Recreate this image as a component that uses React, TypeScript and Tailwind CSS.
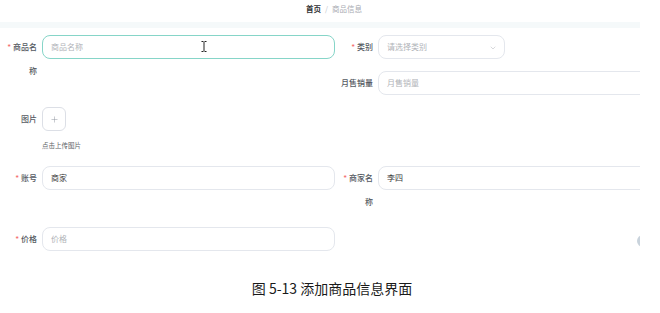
import { ChevronDown, Plus } from 'lucide-react';

const font = { fontFamily: '"Noto Sans CJK SC", "Noto Sans", sans-serif' };

function Label({ lines, required }: { lines: string[]; required?: boolean }) {
  return (
    <div className="w-[32px] shrink-0 text-right text-[8px] leading-[24px] text-[#555a62] font-medium">
      {lines.map((line, i) => (
        <div key={i} className="whitespace-nowrap">
          {i === 0 && required && <span className="text-[#f56c6c] mr-[2px]">*</span>}
          {line}
        </div>
      ))}
    </div>
  );
}

function Field({
  text,
  placeholder,
  width = 'w-[293px]',
  focused,
  children,
}: {
  text?: string;
  placeholder?: string;
  width?: string;
  focused?: boolean;
  children?: React.ReactNode;
}) {
  return (
    <div
      className={`relative ${width} h-[24px] shrink-0 rounded-[8px] border flex items-center px-[8px] text-[8px] ${
        focused ? 'border-[#86d5c8]' : 'border-[#e4e7ed]'
      }`}
    >
      {text ? <span className="text-[#3a3a3a]">{text}</span> : <span className="text-[#b0b3b8]">{placeholder}</span>}
      {children}
    </div>
  );
}

export default function App() {
  return (
    <div className="w-[660px] h-[313px] bg-white overflow-hidden" style={font}>
      <div className="relative w-[640px] h-[272px] overflow-hidden">
        {/* Breadcrumb */}
        <div className="h-[22px] pl-[306px] pt-[4px] text-[7.5px] leading-[10px]">
          <span className="font-bold text-[#303133]">首页</span>
          <span className="text-[#c0c4cc] mx-[4px]">/</span>
          <span className="text-[#a8abb2]">商品信息</span>
        </div>
        <div className="h-[6px] bg-[#f5f9fa]" />

        {/* Form */}
        <div className="pt-[7px]">
          <div className="flex">
            <div className="flex gap-[5px] pl-[5px] w-[335px] shrink-0">
              <Label lines={['商品名', '称']} required />
              <Field placeholder="商品名称" focused>
                <svg className="absolute left-[158px] top-[5px]" width="6" height="11" viewBox="0 0 6 11">
                  <path d="M0.5 0.5h2M3.5 0.5h2M3 1v9M0.5 10.5h2M3.5 10.5h2" stroke="#222" strokeWidth="1" fill="none" />
                </svg>
              </Field>
            </div>
            <div className="ml-[6px] flex flex-col gap-[12px]">
              <div className="flex gap-[5px]">
                <Label lines={['类别']} required />
                <Field placeholder="请选择类别" width="w-[127px]">
                  <ChevronDown className="absolute right-[7px] top-[8px] text-[#b0b3b8]" size={8} strokeWidth={1.5} />
                </Field>
              </div>
              <div className="flex gap-[5px]">
                <Label lines={['月售销量']} />
                <Field placeholder="月售销量" />
              </div>
            </div>
          </div>

          {/* Picture */}
          <div className="mt-[12px] flex gap-[5px] pl-[5px]">
            <Label lines={['图片']} />
            <div>
              <div className="w-[24px] h-[24px] rounded-[6px] border border-[#dcdfe6] flex items-center justify-center">
                <Plus size={9} strokeWidth={1.3} className="text-[#8c939d]" />
              </div>
              <div className="mt-[8px] text-[6.5px] leading-[12px] text-[#606266] whitespace-nowrap">点击上传图片</div>
            </div>
          </div>

          <div className="mt-[15px] flex">
            <div className="flex gap-[5px] pl-[5px] w-[335px] shrink-0">
              <Label lines={['账号']} required />
              <Field text="商家" />
            </div>
            <div className="ml-[6px] flex gap-[5px]">
              <Label lines={['商家名', '称']} required />
              <Field text="李四" />
            </div>
          </div>

          <div className="mt-[13px] flex gap-[5px] pl-[5px]">
            <Label lines={['价格']} required />
            <Field placeholder="价格" />
          </div>
        </div>

        <div className="absolute left-[637px] top-[235px] w-[12px] h-[12px] rounded-full bg-[#c9d3dc]" />
      </div>

      {/* Caption */}
      <div className="h-[32px] pl-[4px] flex items-center justify-center text-[14px] text-[#1a1a1a]">
        图 5-13 添加商品信息界面
      </div>
    </div>
  );
}
